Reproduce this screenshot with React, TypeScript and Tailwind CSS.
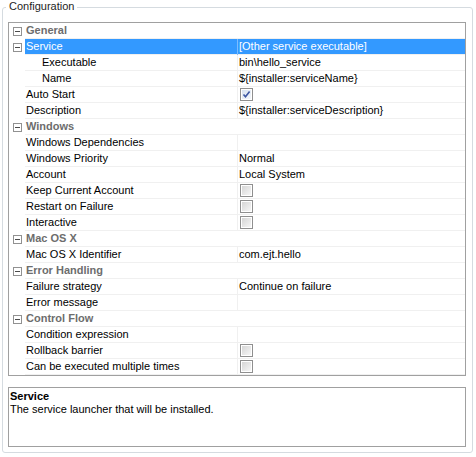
import React from 'react';

type Row =
  | { kind: 'group'; label: string }
  | { kind: 'prop'; label: string; value?: string; check?: boolean; indent?: boolean; selected?: boolean };

const rows: Row[] = [
  { kind: 'group', label: 'General' },
  { kind: 'prop', label: 'Service', value: '[Other service executable]', selected: true },
  { kind: 'prop', label: 'Executable', value: 'bin\\hello_service', indent: true },
  { kind: 'prop', label: 'Name', value: '${installer:serviceName}', indent: true },
  { kind: 'prop', label: 'Auto Start', check: true },
  { kind: 'prop', label: 'Description', value: '${installer:serviceDescription}' },
  { kind: 'group', label: 'Windows' },
  { kind: 'prop', label: 'Windows Dependencies', value: '' },
  { kind: 'prop', label: 'Windows Priority', value: 'Normal' },
  { kind: 'prop', label: 'Account', value: 'Local System' },
  { kind: 'prop', label: 'Keep Current Account', check: false },
  { kind: 'prop', label: 'Restart on Failure', check: false },
  { kind: 'prop', label: 'Interactive', check: false },
  { kind: 'group', label: 'Mac OS X' },
  { kind: 'prop', label: 'Mac OS X Identifier', value: 'com.ejt.hello' },
  { kind: 'group', label: 'Error Handling' },
  { kind: 'prop', label: 'Failure strategy', value: 'Continue on failure' },
  { kind: 'prop', label: 'Error message', value: '' },
  { kind: 'group', label: 'Control Flow' },
  { kind: 'prop', label: 'Condition expression', value: '' },
  { kind: 'prop', label: 'Rollback barrier', check: false },
  { kind: 'prop', label: 'Can be executed multiple times', check: false },
];

function Minus() {
  return (
    <div className="w-[9px] h-[9px] border border-[#919191] bg-white flex items-center justify-center">
      <div className="w-[5px] h-px bg-[#4b4b4b]" />
    </div>
  );
}

function Checkbox({ checked }: { checked: boolean }) {
  return (
    <div className="w-[13px] h-[13px] border border-[#8f8f8f] bg-white p-px">
      <div
        className={
          checked
            ? 'w-full h-full bg-gradient-to-br from-[#d7e2f0] to-[#f4f7fb] flex items-center justify-center'
            : 'w-full h-full bg-gradient-to-br from-[#d6d6d6] to-[#f6f6f6]'
        }
      >
        {checked && (
          <svg width="9" height="9" viewBox="0 0 9 9">
            <path d="M1.5 4.5 L3.5 6.8 L7.6 1.6" stroke="#3d57a3" strokeWidth="1.6" fill="none" />
          </svg>
        )}
      </div>
    </div>
  );
}

export default function App() {
  return (
    <div
      className="w-[476px] h-[457px] bg-white text-[11px] text-black pt-[7px] pl-[2px]"
      style={{ fontFamily: '"Liberation Sans", Arial, sans-serif' }}
    >
      <div className="relative w-[471px] h-[446px] border border-[#d5dbe0] rounded-[3px] pt-[14px] pl-[5px]">
        {/* group box caption */}
        <div className="absolute left-[3px] top-[-8px] bg-white px-[3px] leading-[13px] text-[#1e1e1e]">
          Configuration
        </div>

        {/* property table */}
        <div className="w-[458px] border border-[#a0a0a0]">
          {rows.map((r, i) =>
            r.kind === 'group' ? (
              <div key={i} className="h-4 flex items-center">
                <div className="w-[16px] flex justify-center">
                  <Minus />
                </div>
                <div className="flex-1 h-full border-b border-[#f0f0f0] pl-px leading-[15px] font-bold text-[#6d6d6d]">
                  {r.label}
                </div>
              </div>
            ) : (
              <div key={i} className="h-4 flex">
                <div className="w-[16px] flex justify-center items-center">
                  {r.selected && <Minus />}
                </div>
                <div
                  className={
                    'w-[212px] h-full border-b border-[#f0f0f0] leading-[15px] whitespace-nowrap ' +
                    (r.indent ? 'pl-[17px] ' : 'pl-px ') +
                    (r.selected ? 'bg-[#3399ff] text-white border-[#3399ff]' : '')
                  }
                >
                  {r.label}
                </div>
                <div className={'w-px h-full ' + (r.selected ? 'bg-[#7dbdff]' : 'bg-[#f0f0f0]')} />
                <div
                  className={
                    'flex-1 h-full border-b border-[#f0f0f0] pl-px leading-[15px] whitespace-nowrap ' +
                    (r.selected ? 'bg-[#3399ff] text-white border-[#3399ff]' : '')
                  }
                >
                  {r.check !== undefined ? (
                    <div className="h-full flex items-center pl-px">
                      <Checkbox checked={r.check} />
                    </div>
                  ) : (
                    r.value
                  )}
                </div>
              </div>
            )
          )}
        </div>

        {/* description */}
        <div className="mt-[11px] w-[458px] h-[60px] border border-[#a0a0a0] px-px pt-[2px] leading-[13px]">
          <div className="font-bold">Service</div>
          <div>The service launcher that will be installed.</div>
        </div>
      </div>
    </div>
  );
}
